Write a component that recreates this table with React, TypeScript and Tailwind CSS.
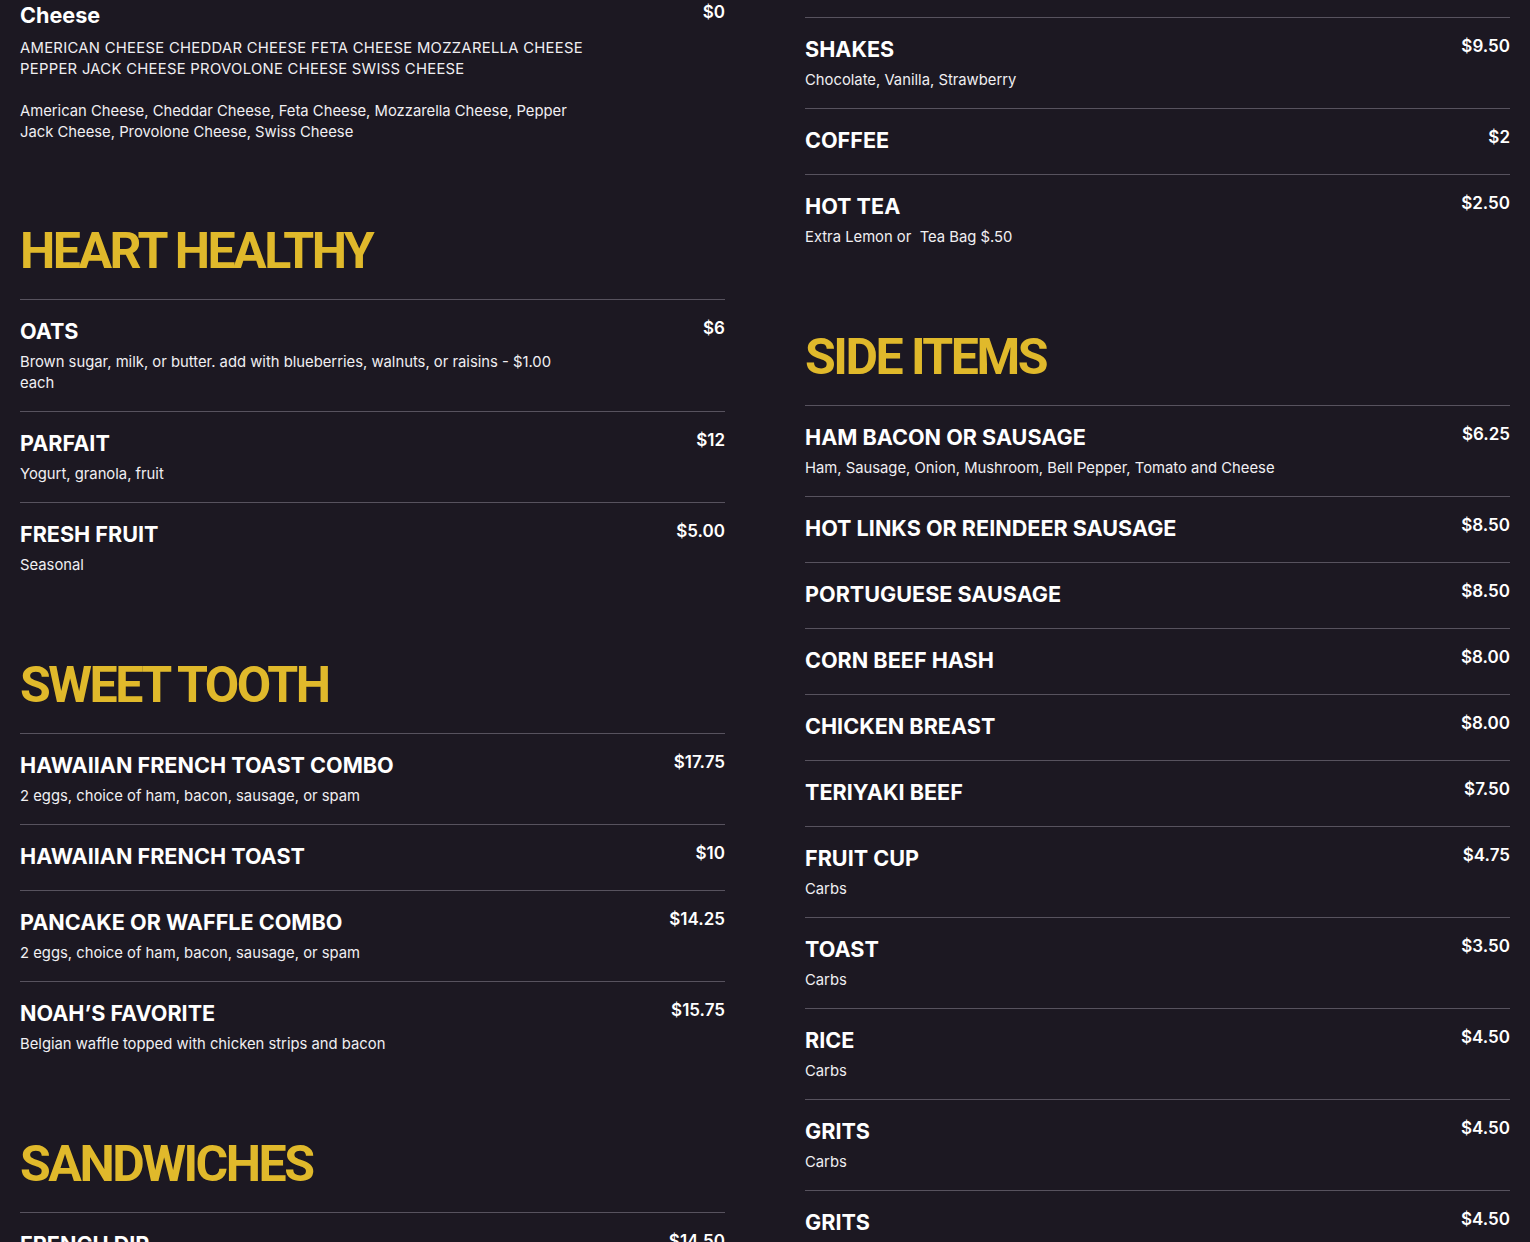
import React from "react";

type Item = { title: string; price: string; desc?: React.ReactNode };

const ItemRow = ({
  item,
  pad = "pb-[17px]",
  descGap = "mt-[4px]",
}: {
  item: Item;
  pad?: string;
  descGap?: string;
}) => (
  <div className={`flex justify-between border-t border-[#57525e] pt-[14px] ${pad}`}>
    <div className="min-w-0">
      <h3 className="font-['Inter',sans-serif] text-[21.6px] leading-[34px] font-bold text-white">
        {item.title}
      </h3>
      {item.desc && (
        <p className={`${descGap} font-['Inter',sans-serif] text-[14.8px] leading-[21px] text-[#f0eff2]`}>
          {item.desc}
        </p>
      )}
    </div>
    <span className="shrink-0 pl-4 font-['Inter',sans-serif] text-[17px] leading-[28px] font-semibold text-white">
      {item.price}
    </span>
  </div>
);

const Section = ({ title, items }: { title: string; items: Item[] }) => (
  <section className="mt-[62px]">
    <h2 className="mb-[18px] font-['Roboto',sans-serif] text-[50px] leading-[60px] font-bold tracking-[-0.05em] text-[#e0b92b]">
      {title}
    </h2>
    {items.map((it, i) => (
      <ItemRow key={i} item={it} />
    ))}
  </section>
);

const cheese: Item = {
  title: "Cheese",
  price: "$0",
  desc: (
    <>
      <span className="tracking-[0.02em]">AMERICAN CHEESE CHEDDAR CHEESE FETA CHEESE MOZZARELLA CHEESE</span>
      <br />
      <span className="tracking-[0.02em]">PEPPER JACK CHEESE PROVOLONE CHEESE SWISS CHEESE</span>
      <br />
      <br />
      American Cheese, Cheddar Cheese, Feta Cheese, Mozzarella Cheese, Pepper
      <br />
      Jack Cheese, Provolone Cheese, Swiss Cheese
    </>
  ),
};

const heartHealthy: Item[] = [
  {
    title: "OATS",
    price: "$6",
    desc: (
      <>
        Brown sugar, milk, or butter. add with blueberries, walnuts, or raisins - $1.00
        <br />
        each
      </>
    ),
  },
  { title: "PARFAIT", price: "$12", desc: "Yogurt, granola, fruit" },
  { title: "FRESH FRUIT", price: "$5.00", desc: "Seasonal" },
];

const sweetTooth: Item[] = [
  { title: "HAWAIIAN FRENCH TOAST COMBO", price: "$17.75", desc: "2 eggs, choice of ham, bacon, sausage, or spam" },
  { title: "HAWAIIAN FRENCH TOAST", price: "$10" },
  { title: "PANCAKE OR WAFFLE COMBO", price: "$14.25", desc: "2 eggs, choice of ham, bacon, sausage, or spam" },
  { title: "NOAH\u2019S FAVORITE", price: "$15.75", desc: "Belgian waffle topped with chicken strips and bacon" },
];

const sandwiches: Item[] = [
  { title: "FRENCH DIP", price: "$14.50", desc: "Roast beef, au jus" },
];

const drinks: Item[] = [
  { title: "SHAKES", price: "$9.50", desc: "Chocolate, Vanilla, Strawberry" },
  { title: "COFFEE", price: "$2" },
  { title: "HOT TEA", price: "$2.50", desc: "Extra Lemon or\u00a0 Tea Bag $.50" },
];

const sides: Item[] = [
  { title: "HAM BACON OR SAUSAGE", price: "$6.25", desc: "Ham, Sausage, Onion, Mushroom, Bell Pepper, Tomato and Cheese" },
  { title: "HOT LINKS OR REINDEER SAUSAGE", price: "$8.50" },
  { title: "PORTUGUESE SAUSAGE", price: "$8.50" },
  { title: "CORN BEEF HASH", price: "$8.00" },
  { title: "CHICKEN BREAST", price: "$8.00" },
  { title: "TERIYAKI BEEF", price: "$7.50" },
  { title: "FRUIT CUP", price: "$4.75", desc: "Carbs" },
  { title: "TOAST", price: "$3.50", desc: "Carbs" },
  { title: "RICE", price: "$4.50", desc: "Carbs" },
  { title: "GRITS", price: "$4.50", desc: "Carbs" },
  { title: "GRITS", price: "$4.50", desc: "Carbs" },
];

export default function App() {
  return (
    <div className="h-[1242px] overflow-hidden bg-[#1c1822] px-[20px]">
      <div className="flex gap-[80px]">
        <div className="flex-1 -mt-[17px]">
          <ItemRow item={cheese} pad="pb-[16px]" descGap="mt-[6px]" />
          <Section title="HEART HEALTHY" items={heartHealthy} />
          <Section title="SWEET TOOTH" items={sweetTooth} />
          <Section title="SANDWICHES" items={sandwiches} />
        </div>
        <div className="flex-1 pt-[17px]">
          {drinks.map((it, i) => (
            <ItemRow key={i} item={it} />
          ))}
          <Section title="SIDE ITEMS" items={sides} />
        </div>
      </div>
    </div>
  );
}
